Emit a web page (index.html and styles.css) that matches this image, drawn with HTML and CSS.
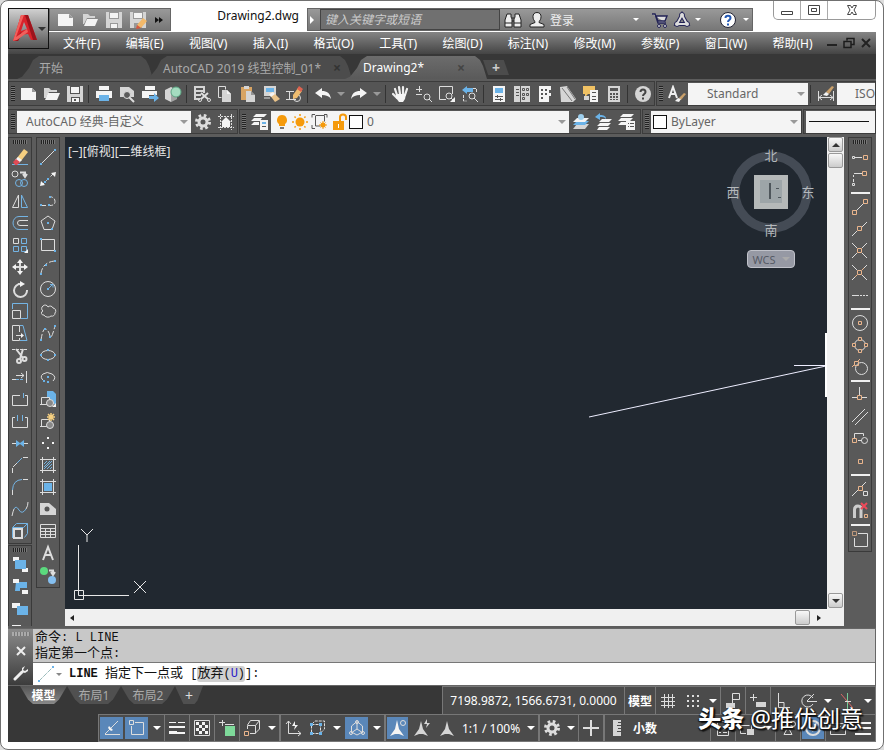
FILE: index.html
```html
<!DOCTYPE html>
<html lang="zh-CN">
<head>
    <meta charset="UTF-8">
    <meta name="viewport" content="width=device-width, initial-scale=1.0">
    <title>Drawing2.dwg</title>
    <link rel="stylesheet" href="styles.css">
</head>
<body>

<div class="window">

    <!-- Title bar and menu -->
    <header class="header">
        <button class="app-button" aria-label="应用程序菜单">
            <svg width="26" height="30" viewBox="0 0 26 30">
                <path fill="#d9232b" fill-rule="evenodd" d="M9 1h7l9 25h-6l-3-6-8 1-2 6H1zM12 8l-3 9 6-2z"/>
                <path fill="#9c141c" d="M13 1h3l9 25h-4zM1 27l8-9 1 2-4 7z"/>
                <path fill="#f0605c" d="M9 1h3L4 23l11-8 1 3-11 8-4 1z"/>
            </svg>
            <i class="caret dark"></i>
        </button>
        <div class="title-row">
            <div class="quick-access">
                <button aria-label="新建"><svg class="icon" viewBox="0 0 18 18"><path class="wf" d="M1 3h11l4 4v8H1z"/><path class="gf" d="M12 3v4h4z"/></svg></button>
                <button aria-label="打开"><svg class="icon" viewBox="0 0 18 18"><path class="lf" d="M2 3h5l2 2h5v2H6l-3 6H2z"/><path class="wf" d="M6 8h11l-3 7H3z"/></svg></button>
                <button aria-label="保存"><svg class="icon" viewBox="0 0 18 18"><path class="lf" d="M1 1h16v16H1z"/><path class="gf" d="M4 1h10v7H4zM5 12h8v5H5z"/><path class="wf" d="M5 2h8v5H5zM6 13h6v4H6z"/></svg></button>
                <button aria-label="另存为"><svg class="icon" viewBox="0 0 18 18"><path class="lf" d="M1 1h16v16H1z"/><path class="gf" d="M4 1h10v7H4zM5 12h8v5H5z"/><path class="wf" d="M5 2h8v5H5z"/><path fill="#f3b96a" d="M8 14l6-7 4 3-6 7z"/><path fill="#d9573c" d="M8 14l4 3-5 1z"/></svg></button>
                <button aria-label="更多"><svg class="icon" viewBox="0 0 18 18"><path fill="#111" d="M5 6l4 3-4 3zM9 6l4 3-4 3z"/></svg></button>
            </div>
            <div class="window-title">Drawing2.dwg</div>
            <div class="info-center">
                <button class="expand" aria-label="展开"><svg width="8" height="10" viewBox="0 0 8 10"><path fill="#fff" d="M2 1l4 4-4 4z"/></svg></button>
                <input class="search" type="text" placeholder="键入关键字或短语" aria-label="搜索">
                <button aria-label="查找"><svg class="icon" viewBox="0 0 18 18"><path fill="#eee" stroke="#222" d="M3 3h4v3l1 2v8H1V9zM11 3h4l2 6v7h-7V8l1-2z"/><path stroke="#222" d="M8 7h2M8 10h2M1 12h7M10 12h7"/></svg></button>
                <button class="sign-in"><svg class="icon" viewBox="0 0 18 18"><path fill="#eee" stroke="#222" d="M9 1.500c-6 0-4 8-2 9v1l-5 2v2.500h14v-2.500l-5-2v-1c2-1 4-9-2-9z"/></svg>登录</button>
                <i class="caret light push"></i>
                <button aria-label="购物车"><svg class="icon" viewBox="0 0 18 18"><path fill="#ddd" stroke="#225" stroke-width="1.400" d="M1 3h3l3 9h8M5 5h11l-2 5H7z"/><circle cx="8" cy="15" r="1.500" fill="#ddd" stroke="#225"/><circle cx="14" cy="15" r="1.500" fill="#ddd" stroke="#225"/></svg></button>
                <button aria-label="应用商店"><svg class="icon" viewBox="0 0 18 18"><g fill="#ddd" stroke="#225"><path fill="none" stroke-width="4" d="M9 4l-5 9h10z"/><circle cx="9" cy="4" r="2.500"/><circle cx="4" cy="13" r="2.500"/><circle cx="14" cy="13" r="2.500"/></g><path fill="none" stroke="#ddd" stroke-width="2" d="M9 4l-5 9h10z"/></svg></button>
                <i class="caret light"></i>
                <button class="help-button" aria-label="帮助"><svg class="icon" viewBox="0 0 18 18"><circle cx="9" cy="9" r="7.500" fill="#fff" stroke="#223"/><path fill="none" stroke="#2459b5" stroke-width="2" d="M6.500 7c0-3 5-3 5 0 0 2-2.500 2-2.500 4M9 12.500v2"/></svg></button>
                <i class="caret light"></i>
            </div>
            <div class="window-controls">
                <button aria-label="最小化"><svg width="14" height="12" viewBox="0 0 14 12"><path class="sys" d="M1.500 7.500h11v3h-11z"/></svg></button>
                <button aria-label="还原"><svg width="14" height="12" viewBox="0 0 14 12"><path class="sys" d="M1.500 1.500h11v9h-11zM4.500 4.500h5v3h-5z"/></svg></button>
                <button class="close" aria-label="关闭"><svg width="14" height="12" viewBox="0 0 14 12"><path class="sys" d="M2.500 1.500h3L7 4l1.500-2.500h3L9 6l2.500 4.500h-3L7 8l-1.500 2.500h-3L5 6z"/></svg></button>
            </div>
        </div>
        <nav class="menu">
            <a href="#">文件(F)</a>
            <a href="#">编辑(E)</a>
            <a href="#">视图(V)</a>
            <a href="#">插入(I)</a>
            <a href="#">格式(O)</a>
            <a href="#">工具(T)</a>
            <a href="#">绘图(D)</a>
            <a href="#">标注(N)</a>
            <a href="#">修改(M)</a>
            <a href="#">参数(P)</a>
            <a href="#">窗口(W)</a>
            <a href="#">帮助(H)</a>
            <span class="doc-controls">
                <button aria-label="最小化图形"><svg width="12" height="12" viewBox="0 0 12 12"><path fill="#222" d="M1 7h10v2H1z"/></svg></button>
                <button aria-label="还原图形"><svg width="12" height="12" viewBox="0 0 12 12"><path fill="none" stroke="#1c1c1c" stroke-width="1.500" d="M4 3.500v-2h7v6H8.500M1 4.500h7v6H1z"/></svg></button>
                <button aria-label="关闭图形"><svg width="12" height="12" viewBox="0 0 12 12"><path stroke="#222" stroke-width="2" d="M2 2l8 8M10 2l-8 8"/></svg></button>
            </span>
        </nav>
    </header>

    <!-- Drawing tabs -->
    <div class="tabs">
        <button class="tab start">开始</button>
        <button class="tab file">AutoCAD 2019 线型控制_01*<b class="tab-close">×</b></button>
        <button class="tab active">Drawing2*<b class="tab-close">×</b></button>
        <button class="tab add" aria-label="新图形">+</button>
    </div>

    <!-- Toolbars -->
    <div class="toolbar-row">
        <div class="toolbar">
            <i class="grip"></i>
            <button aria-label="新建"><svg class="icon" viewBox="0 0 18 18"><path class="wf" d="M1 3h11l4 4v8H1z"/><path class="gf" d="M12 3v4h4z"/></svg></button>
            <button aria-label="打开"><svg class="icon" viewBox="0 0 18 18"><path class="lf" d="M1 3h5l2 2h6v2H6l-3 6H1z"/><path class="wf" d="M5 8h12l-3 7H2z"/></svg></button>
            <button aria-label="保存"><svg class="icon" viewBox="0 0 18 18"><path class="lf" d="M1 1h16v16H1z"/><path class="df" d="M4 1h10v8H4zM5 12h9v5H5z"/><path class="wf" d="M5 2h8v6H5zM6 13h7v4H6z"/><path class="df" d="M8 14h2v2H8z"/></svg></button>
            <i class="sep"></i>
            <button aria-label="打印"><svg class="icon" viewBox="0 0 18 18"><path class="wf" d="M4 1h10v4H4zM1 6h16v7h-3v-2H4v2H1z"/><path class="bf" d="M4 10h10v6H4z"/></svg></button>
            <button aria-label="打印预览"><svg class="icon" viewBox="0 0 18 18"><path class="lf" d="M2 2h9l5 4v6H2z"/><circle cx="9" cy="10" r="3.500" fill="#5b5b5b" stroke="#ddd"/><path class="ln thick" d="M11 12l5 5"/></svg></button>
            <button aria-label="发布"><svg class="icon" viewBox="0 0 18 18"><path class="wf" d="M4 1h10v4H4zM1 6h15v4H8v3H1z"/><path class="bf" d="M8 11h5V8l5 5-5 4v-3H8z"/></svg></button>
            <button aria-label="三维打印"><svg class="icon" viewBox="0 0 18 18"><path class="lf" d="M1 5l6-3 6 3v9l-6 3-6-3z"/><path class="df" d="M7 8l6-3v9l-6 3z" opacity=".4"/><circle cx="12" cy="7" r="5" fill="#a5dcc0" stroke="#5fa786"/></svg></button>
            <i class="sep"></i>
            <button aria-label="剪切"><svg class="icon" viewBox="0 0 18 18"><path class="lf" d="M1 1h10v2H1zM1 5h11v2H1zM1 9h7v2H1zM1 13h6v2H1zM1 1h2v14H1zM10 1h2v7h-2z"/><path class="ln thick" d="M8 8l7 6M15 8l-7 6"/><circle class="ln" cx="7" cy="15" r="1.500"/><circle class="ln" cx="16" cy="15" r="1.500"/></svg></button>
            <button aria-label="复制"><svg class="icon" viewBox="0 0 18 18"><path class="ln" d="M5.500 12.500h-3v-11h7v3"/><path class="lf" d="M6 5h5l4 4v8H6z"/><path class="wf" d="M11 5v4h4z"/></svg></button>
            <button aria-label="粘贴"><svg class="icon" viewBox="0 0 18 18"><path fill="#d8a463" d="M2 2h11v13H2z"/><path class="lf" d="M5 1h5v3H5zM7 6h5l4 4v7H7z"/><path class="df" d="M12 6v4h4z" opacity=".5"/></svg></button>
            <button aria-label="特性匹配"><svg class="icon" viewBox="0 0 18 18"><path class="lf" d="M2 1h12v10H2z"/><path class="bf" d="M4 3h8v4H4z"/><path class="ln" d="M2 13h6"/><path fill="#e9c38a" d="M7 9l4-2 7 7-5 3z"/><path class="wf" d="M7 9l4-2 2 2-4 3z"/></svg></button>
            <button aria-label="块编辑器"><svg class="icon" viewBox="0 0 18 18"><path class="ln" d="M1 6.500h8M4.500 6v8M1 14.500h10"/><circle class="ln" cx="12" cy="13" r="3.500"/><path fill="#efbd70" d="M8 10l5-7 4 3-5 7-4 1z"/><path fill="#df6350" d="M12 4l2-3 4 3-2 3z"/></svg></button>
            <i class="sep"></i>
            <button aria-label="放弃"><svg class="icon" viewBox="0 0 18 18"><path class="wf" d="M1 8l7-5v3c5 0 8 2 9 8-2-3-5-4-9-4v3z"/></svg></button>
            <button class="drop" aria-label="放弃列表"><i class="caret"></i></button>
            <button aria-label="重做"><svg class="icon" viewBox="0 0 18 18"><path class="wf" d="M17 8l-7-5v3c-5 0-8 2-9 8 2-3 5-4 9-4v3z"/></svg></button>
            <button class="drop" aria-label="重做列表"><i class="caret"></i></button>
            <i class="sep"></i>
            <button aria-label="平移"><svg class="icon" viewBox="0 0 18 18"><path fill="none" stroke="#eee" stroke-width="2.200" stroke-linecap="round" d="M5 10L3 4M8 9L7 2M11 9V2M13 10l2-6M5 13l-4-4"/><path class="wf" d="M4 9h10l-1 5-2 3H7l-3-4z"/></svg></button>
            <button aria-label="实时缩放"><svg class="icon" viewBox="0 0 18 18"><path class="ln" d="M1 4.500h6M4.500 1v6M1 9.500h6"/><circle class="ln" cx="12" cy="12" r="3"/><path class="ln" d="M14 14l3 3"/></svg></button>
            <button aria-label="窗口缩放"><svg class="icon" viewBox="0 0 18 18"><path class="ln" d="M8 14.500H1.500v-13h13V9"/><circle class="ln" cx="11" cy="11" r="3"/><path class="ln" d="M13 13l3 3"/><path class="wf" d="M17 12v5h-5z"/></svg></button>
            <button aria-label="缩放上一个"><svg class="icon" viewBox="0 0 18 18"><path class="bf" d="M1 5l5-4v2h6v4H6v2z"/><path class="ln" d="M2.500 10v6h3M12 3.500h3.500V7" stroke-dasharray="3 1"/><circle class="ln" cx="11" cy="11" r="3"/><path class="ln" d="M13 13l4 4"/></svg></button>
            <i class="sep"></i>
            <button aria-label="特性"><svg class="icon" viewBox="0 0 18 18"><path class="wf" d="M3 1h12v16H3z"/><path class="bf" d="M5 3h8v5H5z"/><path stroke="#555" d="M5 11.500h8M5 14.500h8M7.500 10v3M10.500 13v3"/></svg></button>
            <button aria-label="设计中心"><svg class="icon" viewBox="0 0 18 18"><path class="lf" d="M1 1h16v16H1z"/><path stroke="#555" fill="none" d="M3 4.500h3M3 7.500h3M3 10.500h3M7.500 1v16M9.500 3.500h2v2h-2zM13.500 3.500h2v2h-2zM9.500 8.500h2v2h-2zM13.500 8.500h2v2h-2zM9.500 12.500h2v2h-2z"/></svg></button>
            <button aria-label="工具选项板"><svg class="icon" viewBox="0 0 18 18"><path class="wf" d="M3 1h12v4h-2v3h2v3h-2v6H3z"/><path class="df" d="M5 4h2v2H5zM9 4h2v2H9zM5 8h2v2H5zM9 8h2v2H9zM5 12h2v2H5z"/></svg></button>
            <button aria-label="图纸集"><svg class="icon" viewBox="0 0 18 18"><path class="lf" d="M1 2l7-1 9 13-3 3H2z"/><path fill="none" stroke="#777" d="M3 3l10 13M8 2l8 12"/></svg></button>
            <button aria-label="标记集"><svg class="icon" viewBox="0 0 18 18"><path fill="#f1c264" d="M1 1h12v8H6l-3 3V9H1z"/><path class="wf" d="M8 5h8v12H8z"/><path class="df" d="M10 7h4v1h-4zM10 11h4v1h-4zM10 14h4v1h-4z"/><path class="lf" d="M2 11h5v4H2z"/></svg></button>
            <button aria-label="计算器"><svg class="icon" viewBox="0 0 18 18"><path class="lf" d="M3 1h12v16H3z"/><path class="df" d="M5 3h8v3H5zM5 8h2v2H5zM8 8h2v2H8zM11 8h2v2h-2zM5 11h2v2H5zM8 11h2v2H8zM11 11h2v2h-2zM5 14h2v1H5zM8 14h2v1H8zM11 14h2v1h-2z"/></svg></button>
            <i class="sep"></i>
            <button aria-label="帮助"><svg class="icon" viewBox="0 0 18 18"><circle class="lf" cx="9" cy="9" r="8"/><path fill="none" stroke="#444" stroke-width="2" d="M6.500 7c0-3.500 5-3.500 5 0 0 2-2.500 2-2.500 4M9 12.500v2"/></svg></button>
        </div>
        <div class="toolbar grow">
            <i class="grip"></i>
            <button aria-label="文字样式"><svg class="icon" viewBox="0 0 18 18"><path fill="none" stroke="#eee" stroke-width="2" d="M1 13L5 2l4 11M2 9h6"/><path fill="#caa06a" d="M11 13l5-5 2 1-5 6z"/><path class="wf" d="M7 16l3-3 3 1-2 3z"/></svg></button>
            <span class="combo text-style"><select aria-label="文字样式"><option>Standard</option></select><i class="caret"></i></span>
            <i class="sep"></i>
            <button aria-label="标注样式"><svg class="icon" viewBox="0 0 18 18"><path class="ln" d="M1.500 6v10M16.500 6v10M2 12.500h14M5 10l-3 2.500L5 15M13 10l3 2.500-3 2.500"/><path fill="#caa06a" d="M9 7l6-6 2 1-5 7z"/><path class="wf" d="M6 10l3-3 3 2-2 2z"/></svg></button>
            <span class="combo dim-style"><select aria-label="标注样式"><option>ISO-25</option></select></span>
        </div>
    </div>

    <div class="toolbar-row">
        <div class="toolbar">
            <i class="grip"></i>
            <span class="combo workspace"><select aria-label="工作空间"><option>AutoCAD 经典-自定义</option></select><i class="caret"></i></span>
            <button aria-label="工作空间设置"><svg class="icon" viewBox="0 0 18 18"><circle cx="9" cy="9" r="4" fill="none" stroke="#ddd" stroke-width="3"/><circle cx="9" cy="9" r="6.500" fill="none" stroke="#ddd" stroke-width="3" stroke-dasharray="2.600 2.500"/></svg></button>
            <button aria-label="我的工作空间"><svg class="icon" viewBox="0 0 18 18"><path class="ln" stroke-dasharray="2 1" d="M3.500 1v16M14.500 1v16M1 3.500h16M1 14.500h16"/><path class="wf" d="M9 4l5 5h-1v5H5V9H4z"/></svg></button>
        </div>
        <div class="toolbar layers">
            <i class="grip"></i>
            <button aria-label="图层特性"><svg class="icon" viewBox="0 0 18 18"><path class="wf" d="M5 1h11l-3 3H2zM3 5h8l-2 3H0zM3 9h5v3H0z"/><path class="wf" d="M9 7h8v10H9z"/><path class="bf" d="M11 9h4v2h-4z"/><path class="df" d="M11 13h4v1h-4z"/></svg></button>
            <span class="combo layer">
                <svg class="icon" viewBox="0 0 18 18"><path fill="#f59a0b" d="M9 2a5 5 0 0 0-3 9v2h6v-2a5 5 0 0 0-3-9z"/><path fill="#777" d="M7 14h4v2H7z"/></svg>
                <svg class="icon" viewBox="0 0 18 18"><circle cx="9" cy="9" r="4.500" fill="#f59a0b"/><path stroke="#f59a0b" stroke-width="1.500" d="M9 1v2M9 15v2M1 9h2M15 9h2M3.500 3.500l1.200 1.200M13.300 13.300l1.200 1.200M14.500 3.500l-1.200 1.200M4.700 13.300l-1.200 1.200"/></svg>
                <svg class="icon wide" viewBox="0 0 18 18"><path fill="none" stroke="#555" d="M4.500 2.500h9v6M4.500 3v10h5M1 4.500v-3h3M13 1.500h3v3M1 12v3.500h3"/><circle cx="12" cy="12" r="2.500" fill="#f59a0b"/><path stroke="#f59a0b" d="M12 8v8M8 12h8M9.500 9.500l5 5M14.500 9.500l-5 5"/></svg>
                <svg class="icon" viewBox="0 0 18 18"><path fill="#f59a0b" d="M2 8h11v9H2z"/><path fill="none" stroke="#f59a0b" stroke-width="2" d="M9 8V4q0-2.500 3-2.500T15 4v3"/><path fill="#fff" d="M7 11h1v4H7z"/></svg>
                <i class="swatch"></i>
                <select aria-label="图层"><option>0</option></select><i class="caret"></i>
            </span>
            <button aria-label="置为当前"><svg class="icon" viewBox="0 0 18 18"><path class="lf" d="M5 11h12l-4 5H1z"/><path class="bf" d="M5 8h12l-4 4H1z"/><path class="wf" d="M5 5h12l-4 4H1z"/><circle fill="#9fd0ee" cx="9" cy="4" r="3"/></svg></button>
            <button aria-label="上一个图层"><svg class="icon" viewBox="0 0 18 18"><path class="bf" d="M0 4l5-4v2c4 0 6 1 6 4-2-2-3-2-6-2v3z"/><path class="wf" d="M7 6h10l-3 3H4zM5 10h11l-3 3H2zM4 14h11l-3 3H2z"/></svg></button>
            <button aria-label="图层状态"><svg class="icon" viewBox="0 0 18 18"><path class="wf" d="M5 1h11l-3 3H2zM3 5h12l-3 3H0zM3 9h5v3H0z"/><path class="wf" d="M8 8h9v9H8z"/><path class="df" d="M10 10h1v1h-1zM12 10h4v1h-4zM10 13h1v1h-1zM12 13h4v1h-4z"/></svg></button>
            <i class="spacer"></i>
        </div>
        <div class="toolbar">
            <i class="grip"></i>
            <span class="combo color"><i class="swatch"></i><select aria-label="颜色"><option>ByLayer</option></select><i class="caret"></i></span>
        </div>
        <div class="toolbar linetypes">
            <button class="combo linetype" aria-label="线型"></button>
        </div>
    </div>

    <!-- Work area -->
    <main class="work-area">
        <div class="dock">
            <div class="palette">
                <i class="grip flat"></i>
                <button aria-label="删除"><svg class="icon" viewBox="0 0 18 18"><path class="bl" d="M1 16.500h16"/><path fill="#f5cf80" d="M6 10l7-9 4 3-7 9z"/><path class="wf" d="M4 12l3-3 4 3-3 3z"/><path fill="#e04b55" d="M2 14l3-3 4 3-3 3H4z"/></svg></button>
                <button aria-label="复制"><svg class="icon" viewBox="0 0 18 18"><circle class="ln" cx="4" cy="4" r="3"/><path class="ln thick" d="M9 2.500h5V6M12 4l2 3 2-3"/><circle class="bl" cx="8" cy="13" r="3.500"/><circle class="bl" cx="13" cy="13" r="3.500"/></svg></button>
                <button aria-label="镜像"><svg class="icon" viewBox="0 0 18 18"><path class="ln" d="M7.500 3v12.500h-6z"/><path class="bl" d="M10.500 3v12.500h6z"/></svg></button>
                <button aria-label="偏移"><svg class="icon" viewBox="0 0 18 18"><path class="bl" d="M17 2.500H8a6 6.500 0 0 0 0 13h9"/><path class="ln" d="M17 6.500H9a2.500 2.500 0 0 0 0 5h8"/></svg></button>
                <button aria-label="阵列"><svg class="icon" viewBox="0 0 18 18"><path class="ln" d="M2.500 2.500h5v5h-5z"/><path class="bl" d="M10.500 2.500h5v5h-5zM2.500 10.500h5v5h-5zM10.500 10.500h5v5h-5z"/><path class="wf" d="M17 13v4h-4z"/></svg></button>
                <button aria-label="移动"><svg class="icon" viewBox="0 0 18 18"><path class="ln thick" d="M9 3v12M3 9h12"/><path class="wf" d="M9 1l3 4H6zM9 17l3-4H6zM1 9l4-3v6zM17 9l-4-3v6z"/></svg></button>
                <button aria-label="旋转"><svg class="icon" viewBox="0 0 18 18"><path class="ln thick" d="M10 4a6.500 6.500 0 1 0 6 6M7 4h4"/><path class="wf" d="M9 1l5 3-5 3z"/></svg></button>
                <button aria-label="缩放"><svg class="icon" viewBox="0 0 18 18"><path class="bl" d="M1.500 7V1.500h15v15H10"/><path class="ln" d="M1.500 8.500h8v8h-8z"/></svg></button>
                <button aria-label="拉伸"><svg class="icon" viewBox="0 0 18 18"><path class="bl" d="M9 1.500h3l4 15H9"/><path class="ln" d="M8.500 8V1.500h-7v15h7V14M5 11.500h6"/><path class="wf" d="M10 9l3 2.500-3 2.500z"/></svg></button>
                <button aria-label="修剪"><svg class="icon" viewBox="0 0 18 18"><path class="ln" stroke-dasharray="3 1" d="M1 3.500h16"/><path class="ln thick" d="M5 3l7 9M12 3l-3 10"/><circle class="ln thick" cx="13.500" cy="13" r="2"/><circle class="ln thick" cx="8" cy="15" r="2"/></svg></button>
                <button aria-label="延伸"><svg class="icon" viewBox="0 0 18 18"><path class="bl" stroke-dasharray="3 1" d="M1 11.500h12"/><path class="ln" d="M15.500 3v12M5 7.500h8M10 5l3 2.500-3 2.500"/><path class="ln" d="M1 11.500h4"/></svg></button>
                <button aria-label="打断于点"><svg class="icon" viewBox="0 0 18 18"><path class="ln" d="M9 5.500H1.500v10h15v-10H14"/><path class="bl" d="M12.500 3v5"/></svg></button>
                <button aria-label="打断"><svg class="icon" viewBox="0 0 18 18"><path class="ln" d="M4 5.500H1.500v10h15v-10H14"/><path class="bl" d="M6.500 3v6M11.500 3v6"/></svg></button>
                <button aria-label="合并"><svg class="icon" viewBox="0 0 18 18"><path class="ln" d="M1 9.500h4M13 9.500h4"/><path class="bf" d="M5 6l4 3 4-3v7l-4-3-4 3z"/></svg></button>
                <button aria-label="倒角"><svg class="icon" viewBox="0 0 18 18"><path class="ln" d="M1.500 17v-5M12 1.500h5"/><path class="bl" d="M2 11l9-9"/><path class="ln" d="M2 11l4-4"/></svg></button>
                <button aria-label="圆角"><svg class="icon" viewBox="0 0 18 18"><path class="ln" d="M1.500 17v-5M12 1.500h5"/><path class="bl" d="M1.500 12Q2 2 11 1.500"/></svg></button>
                <button aria-label="光顺曲线"><svg class="icon" viewBox="0 0 18 18"><path class="ln" d="M1 16q1-5 2-7M15 9q2-3 2-7"/><path class="bl" d="M3 9q2-4 5 1t7-1"/></svg></button>
                <button aria-label="分解"><svg class="icon" viewBox="0 0 18 18"><path class="ln thick" d="M3 7h8v9H3z"/><path class="bl" d="M1.500 5.500l4-4h11l-4 4zM13.500 15.500l3-4v-10M1.500 6v10"/></svg></button>
            </div>
            <div class="palette">
                <i class="grip flat"></i>
                <button aria-label="前置"><svg class="icon" viewBox="0 0 18 18"><path class="wf" d="M2 1h6v4H2zM11 12h6v4h-6z"/><path class="bf" d="M4 4h11v9H4z"/></svg></button>
                <button aria-label="后置"><svg class="icon" viewBox="0 0 18 18"><path class="bf" d="M5 4h11v6H9v3H4z"/><path class="wf" d="M2 1h6v4H2zM11 12h6v4h-6z"/></svg></button>
                <button aria-label="置于对象之上"><svg class="icon" viewBox="0 0 18 18"><path class="wf" d="M1 3h8v5H1z"/><path class="bf" d="M6 6h11v9H6z"/></svg></button>
                <button aria-label="置于对象之下"><svg class="icon" viewBox="0 0 18 18"><path class="wf" d="M1 3h9v5H1z"/><path class="bf" d="M6 9h11v6H6z"/></svg></button>
            </div>
        </div>
        <div class="dock">
            <div class="palette">
                <i class="grip flat"></i>
                <button aria-label="直线"><svg class="icon" viewBox="0 0 18 18"><path class="ln" d="M2 16L16 2"/><path class="bf" d="M1 15h2v2H1zM15 1h2v2h-2z"/></svg></button>
                <button aria-label="构造线"><svg class="icon" viewBox="0 0 18 18"><path class="ln" stroke-dasharray="4 2" d="M3 15L15 3"/><path class="wf" d="M1 16l1-5 4 4zM17 2l-1 5-4-4z"/><path class="bf" d="M5 11h2v2H5zM8 8h2v2H8z"/></svg></button>
                <button aria-label="多段线"><svg class="icon" viewBox="0 0 18 18"><path class="ln" d="M2 13.500h9q5 0 5-4t-5-5" stroke-dasharray="5 2"/><path class="bf" d="M1 12h2v2H1zM9 12h2v2H9zM10 4h2v2h-2z"/></svg></button>
                <button aria-label="正多边形"><svg class="icon" viewBox="0 0 18 18"><path class="ln" d="M9 2l7 5-3 8.500H5L2 7z"/><path class="bf" d="M8 8h2v2H8zM12 14h2v2h-2z"/></svg></button>
                <button aria-label="矩形"><svg class="icon" viewBox="0 0 18 18"><path class="ln" d="M2.500 3.500h13v11h-13z"/><path class="bf" d="M1 2h2v2H1zM15 14h2v2h-2z"/></svg></button>
                <button aria-label="圆弧"><svg class="icon" viewBox="0 0 18 18"><path class="ln" d="M2 15Q4 4 16 3" stroke-dasharray="5 2"/><path class="bf" d="M1 15h2v2H1zM6 6h2v2H6zM15 2h2v2h-2z"/></svg></button>
                <button aria-label="圆"><svg class="icon" viewBox="0 0 18 18"><circle class="ln" cx="9" cy="9" r="7.500"/><path class="bl" d="M9 9l4-4M11 4.500h3v3"/><path class="bf" d="M8 8h2v2H8z"/></svg></button>
                <button aria-label="修订云线"><svg class="icon" viewBox="0 0 18 18"><path class="ln" d="M4 9a3 3 0 0 1 0-5 3 3 0 0 1 5 1 3 3 0 0 1 5 1 3 3 0 0 1 2 5 3 3 0 0 1-4 3 4 3 0 0 1-7-1 2 2 0 0 1-1-4z"/></svg></button>
                <button aria-label="样条曲线"><svg class="icon" viewBox="0 0 18 18"><path class="ln" d="M2 16Q4 3 7 5t4 7 5-10" stroke-dasharray="6 2"/><path class="bf" d="M1 15h2v2H1zM5 4h2v2H5zM10 12h2v2h-2zM15 1h2v2h-2z"/></svg></button>
                <button aria-label="椭圆"><svg class="icon" viewBox="0 0 18 18"><ellipse class="ln" cx="9" cy="9" rx="7" ry="4.500"/><path class="bf" d="M1 8h2v2H1zM15 8h2v2h-2zM8 3h2v2H8zM8 13h2v2H8z"/></svg></button>
                <button aria-label="椭圆弧"><svg class="icon" viewBox="0 0 18 18"><path class="ln" d="M5 13Q0 9 4 6t9 0 1 7"/><path class="bf" d="M8 8h2v2H8zM4 12h2v2H4zM8 13h2v2H8z"/></svg></button>
                <button aria-label="插入块"><svg class="icon" viewBox="0 0 18 18"><path class="bf" d="M8 1h6l3 3v10H8z"/><path fill="#5b5b5b" stroke="#ddd" d="M2.500 7.500h8v7h-8zM1 14.500h8"/><circle cx="11" cy="13" r="3.500" fill="#888" stroke="#ddd"/><path class="wf" d="M17 13v4h-4z"/></svg></button>
                <button aria-label="创建块"><svg class="icon" viewBox="0 0 18 18"><path class="ln" d="M10.500 9V7.500h-8v7H8M1 14.500h8"/><circle cx="11" cy="13" r="3.500" fill="#888" stroke="#ddd"/><path stroke="#f5cf80" stroke-width="1.500" d="M12 1v8M8 5h8M9 2l6 6M15 2L9 8"/></svg></button>
                <button aria-label="点"><svg class="icon" viewBox="0 0 18 18"><path class="wf" d="M8 3h2v2H8zM3 8h2v2H3zM13 8h2v2h-2zM8 13h2v2H8z"/></svg></button>
                <button aria-label="图案填充"><svg class="icon" viewBox="0 0 18 18"><path class="ln" d="M3.500 1v16M14.500 1v16M1 3.500h16M1 14.500h16"/><path class="bl" d="M5 8l3-3M5 11l6-6M5 13l8-8M8 13l5-5M11 13l2-2"/></svg></button>
                <button aria-label="渐变色"><svg class="icon" viewBox="0 0 18 18"><path class="ln" d="M3.500 1v16M14.500 1v16M1 3.500h16M1 14.500h16"/><path class="bf" d="M5 5h8v8H5z"/></svg></button>
                <button aria-label="面域"><svg class="icon" viewBox="0 0 18 18"><path class="lf" d="M1 3h9l7 6v6H1z"/><circle class="df" cx="8" cy="9" r="2.500"/></svg></button>
                <button aria-label="表格"><svg class="icon" viewBox="0 0 18 18"><path class="ln" d="M1.500 2.500h15v13h-15zM1 6.500h16M1 9.500h16M1 12.500h16M6.500 6v10M11.500 6v10"/></svg></button>
                <button aria-label="多行文字"><svg class="icon" viewBox="0 0 18 18"><path fill="none" stroke="#ddd" stroke-width="2" d="M4 16L9 3l5 13M6 11h6"/></svg></button>
                <button aria-label="添加选定对象"><svg class="icon" viewBox="0 0 18 18"><circle cx="5" cy="5" r="4" fill="#5bd97e"/><circle cx="13" cy="14" r="4" fill="#85bff0"/><path class="ln thick" d="M10 4.500h4V8M12 6l2 3 2-3"/></svg></button>
            </div>
        </div>

        <div class="viewport">
            <div class="canvas">
                <span class="view-label">[−][俯视][二维线框]</span>
                <svg class="view-cube" width="96" height="96" viewBox="0 0 96 96">
                    <circle cx="48" cy="47" r="36" fill="none" stroke="#444b55" stroke-width="9"/>
                    <path fill="#b5b9b9" d="M31 30h34v34H31z"/>
                    <path fill="#9da5a8" d="M37 35h22v23H37z"/>
                    <path stroke="#4e565b" stroke-width="2" d="M47 38v16"/>
                    <path stroke="#4e565b" d="M53 43.500h3M55 52.500h3"/>
                    <text x="48" y="15">北</text>
                    <text x="48" y="90">南</text>
                    <text x="10" y="52">西</text>
                    <text x="85" y="52">东</text>
                </svg>
                <button class="wcs">WCS<i class="caret"></i></button>
                <svg class="rubber-band" width="240" height="68" viewBox="0 0 240 68">
                    <path stroke="#eef" fill="none" d="M2 84L239 33M207 32.500h32"/>
                    <path stroke="#fff" stroke-width="2" d="M239 0v64"/>
                </svg>
                <svg class="ucs" width="80" height="76" viewBox="0 0 80 76">
                    <path stroke="#e8e8e8" fill="none" d="M5.500 16v46M10 66.500h46M1.500 61.500h9v9h-9zM5.500 62v4.500h5M8 0l6 6 6-6M14 6v7M61 52l12 12M73 52L61 64"/>
                </svg>
            </div>
            <div class="scroll-y">
                <button aria-label="向上滚动"><i class="caret up"></i></button>
                <button class="thumb" aria-label="垂直滑块"></button>
                <button class="end" aria-label="向下滚动"><i class="caret"></i></button>
            </div>
            <div class="scroll-x">
                <button aria-label="向左滚动"><svg width="6" height="8" viewBox="0 0 6 8"><path fill="#222" d="M5 1v6L1 4z"/></svg></button>
                <button class="thumb" aria-label="水平滑块"></button>
                <button aria-label="向右滚动"><svg width="6" height="8" viewBox="0 0 6 8"><path fill="#222" d="M1 1v6l4-3z"/></svg></button>
            </div>
        </div>

        <div class="dock right">
            <div class="palette">
                <i class="grip flat"></i>
                <button aria-label="临时追踪点"><svg class="icon" viewBox="0 0 18 18"><path class="ln" d="M1.500 8.500h2v2h-2zM4 9.500h7"/><path class="or" d="M12.500 7.500h4v4h-4z"/></svg></button>
                <button aria-label="捕捉自"><svg class="icon" viewBox="0 0 18 18"><path class="ln" d="M11 3.500H2.500V12" stroke-dasharray="8 2 2 2"/><path class="ln" d="M1.500 13.500h2v2h-2z"/><path class="or" d="M11.500 1.500h4v4h-4z"/></svg></button>
                <i class="rule"></i>
                <button aria-label="端点"><svg class="icon" viewBox="0 0 18 18"><path class="ln" d="M5 13l8-8"/><path class="or" d="M1.500 12.500h4v4h-4zM12.500 1.500h4v4h-4z"/></svg></button>
                <button aria-label="中点"><svg class="icon" viewBox="0 0 18 18"><path class="ln" d="M1 16l5-5M11 7l5-5"/><path class="or" d="M6.500 6.500h4v4h-4z"/></svg></button>
                <button aria-label="交点"><svg class="icon" viewBox="0 0 18 18"><path class="ln" d="M1 1l5 5M11 11l5 5M1 16l5-5M11 6l5-5"/><path class="or" d="M6.500 6.500h4v4h-4z"/></svg></button>
                <button aria-label="外观交点"><svg class="icon" viewBox="0 0 18 18"><path class="ln" d="M1 1l5 5M11 11l5 5M1 16l3-3M13 4l3-3"/><path class="or" d="M6.500 6.500h4v4h-4zM4 13l2-2M11 6l2-2"/></svg></button>
                <button aria-label="延长线"><svg class="icon" viewBox="0 0 18 18"><path class="ln" d="M1 9.500h7"/><path class="ln" stroke-dasharray="2 1" d="M9 9.500h8"/></svg></button>
                <i class="rule"></i>
                <button aria-label="圆心"><svg class="icon" viewBox="0 0 18 18"><circle class="ln" cx="9" cy="9" r="7.500"/><path class="or" d="M7.500 7.500h3v3h-3z"/></svg></button>
                <button aria-label="象限点"><svg class="icon" viewBox="0 0 18 18"><circle class="ln" cx="9" cy="9" r="5.500"/><path fill="#595959" stroke="#eab58c" d="M7.500 1.500h3v3h-3zM7.500 13.500h3v3h-3zM1.500 7.500h3v3h-3zM13.500 7.500h3v3h-3z"/></svg></button>
                <button aria-label="切点"><svg class="icon" viewBox="0 0 18 18"><circle class="ln" cx="10.500" cy="10.500" r="6"/><path class="or" d="M3.500 3.500h4v4h-4zM1 9l2-2M7 3l2-2"/></svg></button>
                <i class="rule"></i>
                <button aria-label="垂足"><svg class="icon" viewBox="0 0 18 18"><path class="ln" d="M8.500 1v8M1 11.500h5M11 11.500h5"/><path class="or" d="M6.500 9.500h4v4h-4z"/></svg></button>
                <button aria-label="平行线"><svg class="icon" viewBox="0 0 18 18"><path class="ln" d="M1 14L14 1M4 17L17 4"/></svg></button>
                <button aria-label="插入点"><svg class="icon" viewBox="0 0 18 18"><path class="ln" d="M3.500 8V3.500h9V6M7 10.500h4"/><circle class="ln" cx="13.500" cy="10.500" r="3"/><path class="or" d="M1.500 8.500h4v4h-4z"/></svg></button>
                <button aria-label="节点"><svg class="icon" viewBox="0 0 18 18"><path class="or" d="M7.500 7.500h4v4h-4z"/></svg></button>
                <i class="rule"></i>
                <button aria-label="最近点"><svg class="icon" viewBox="0 0 18 18"><path class="ln" d="M1 16l6-6M11 6l4-4M12.500 11.500h4v4h-4z"/><path class="or" d="M7.500 6.500h4v4h-4z"/></svg></button>
                <button aria-label="无捕捉"><svg class="icon" viewBox="0 0 18 18"><path fill="none" stroke="#ccc" stroke-width="3" d="M3.500 16V8q0-4 3.500-4t3 4v8"/><path stroke="#ef4a5a" stroke-width="2" d="M10 1l6 6M16 1l-6 6"/><path class="or" d="M13.500 12.500h3v3h-3z"/></svg></button>
                <i class="rule"></i>
                <button aria-label="对象捕捉设置"><svg class="icon" viewBox="0 0 18 18"><path class="ln" d="M7 3.500h9.500v13h-13V8"/><path class="or" opacity=".7" d="M1.500 1.500h4v4h-4z"/></svg></button>
            </div>
        </div>
    </main>

    <!-- Command line -->
    <section class="command">
        <div class="command-handle">
            <i class="grip flat"></i>
            <button aria-label="关闭命令行"><svg width="12" height="12" viewBox="0 0 12 12"><path stroke="#eee" stroke-width="2" d="M2 2l8 8M10 2l-8 8"/></svg></button>
            <button aria-label="自定义"><svg width="16" height="16" viewBox="0 0 16 16"><path stroke="#eee" stroke-width="3" stroke-linecap="round" d="M2 14l7-7"/><path fill="#eee" d="M12 1L9 3v4l3 1 3-2V4l-3 2-2-1z"/></svg></button>
        </div>
        <div class="command-body">
            <div class="history"><div><span>命令</span>: L LINE</div><div><span>指定第一个点</span>:</div></div>
            <div class="prompt">
                <svg class="icon" viewBox="0 0 18 18"><path stroke="#9bb" stroke-dasharray="5 1" d="M2 16L16 2"/><path class="bf" d="M1 15h2v2H1zM15 1h2v2h-2z"/></svg>
                <i class="caret"></i>
                <p><b>LINE</b> <span>指定下一点或</span> [<button class="option"><span>放弃</span>(<em>U</em>)</button>]:</p>
            </div>
        </div>
    </section>

    <!-- Layout tabs and status bar -->
    <footer class="footer">
        <div class="footer-top">
            <div class="layouts">
                <button class="layout model">模型</button>
                <button class="layout">布局1</button>
                <button class="layout">布局2</button>
                <button class="layout plus" aria-label="新建布局">+</button>
            </div>
            <div class="status upper">
                <button class="coords">7198.9872, 1566.6731, 0.0000</button>
                <button class="space line">模型</button>
                <button class="line" aria-label="栅格"><svg class="icon" viewBox="0 0 18 18"><path class="ln" d="M5.500 2v14M9.500 2v14M13.500 2v14M2 5.500h14M2 9.500h14M2 13.500h14"/></svg></button>
                <button aria-label="捕捉模式"><svg class="icon" viewBox="0 0 18 18"><path class="ln thick" stroke-dasharray="2 3" d="M3 4h12M3 9h12M3 14h12"/></svg></button>
                <button class="drop" aria-label="捕捉设置"><i class="caret"></i></button>
                <button class="line" aria-label="推断约束"><svg class="icon" viewBox="0 0 18 18"><path class="ln" d="M8.500 11V1.500h7v6h-7"/><path class="lf" d="M2 11h9v5H2z"/></svg></button>
                <button class="line" aria-label="动态输入"><svg class="icon" viewBox="0 0 18 18"><path class="ln" d="M1 5.500h7M4.500 2v7"/><path class="lf" d="M7 10h10v5H7z"/></svg></button>
                <button class="line" aria-label="正交"><svg class="icon" viewBox="0 0 18 18"><path class="ln" d="M4.500 1v14.500H16M5 10.500h5v5"/></svg></button>
                <button aria-label="极轴追踪"><svg class="icon" viewBox="0 0 18 18"><path class="ln" d="M14 6A6 6 0 1 0 14 12M8 9l7-7M8 9.500h10"/></svg></button>
                <button class="drop" aria-label="极轴设置"><i class="caret"></i></button>
                <button aria-label="等轴测草图"><svg class="icon" viewBox="0 0 18 18"><path stroke="#d66" d="M2 2l12 14"/><path stroke="#7c9" d="M8.500 1v16"/><path class="ln" d="M6 9.500h6"/></svg></button>
                <button class="drop" aria-label="等轴测设置"><i class="caret"></i></button>
            </div>
        </div>
        <div class="status lower">
            <button class="on" aria-label="对象捕捉追踪"><svg class="icon" viewBox="0 0 18 18"><path class="ln" d="M2 15L15 2M2 15.500h15"/><path class="wf" d="M6 7l4 4-2 1-3-3z"/></svg></button>
            <button class="on" aria-label="二维对象捕捉"><svg class="icon" viewBox="0 0 18 18"><path class="ln" d="M7 3.500h8.500v12h-12V7M1.500 1.500h4v4h-4z"/></svg></button>
            <button class="drop" aria-label="捕捉列表"><i class="caret"></i></button>
            <button class="line" aria-label="线宽"><svg class="icon" viewBox="0 0 18 18"><path class="wf" d="M1 3h7v1H1zM10 3h7v1h-7zM1 7h7v2H1zM8 7h9v2H8zM1 12h8v3H1zM9 13h8v2H9z"/></svg></button>
            <button class="line" aria-label="透明度"><svg class="icon" viewBox="0 0 18 18"><path class="ln" d="M1.500 1.500h15v15h-15z"/><path class="wf" d="M3 3h3v3H3zM9 3h3v3H9zM6 6h3v3H6zM12 6h3v3h-3zM3 9h3v3H3zM9 9h3v3H9zM6 12h3v3H6zM12 12h3v3h-3z"/></svg></button>
            <button class="line" aria-label="选择循环"><svg class="icon" viewBox="0 0 18 18"><path class="ln" d="M1 3.500h6M4.500 1v6M7 5.500h9"/><path fill="#7ed99a" d="M7 7h10v10H7z"/></svg></button>
            <button class="line" aria-label="三维对象捕捉"><svg class="icon" viewBox="0 0 18 18"><path class="ln" d="M4.500 10V6.500h8v8H7M4.500 6l3-4.500h9l-4 5M16.500 2v8l-4 4"/><path class="or" d="M1.500 12.500h4v4h-4z"/></svg></button>
            <button class="drop" aria-label="三维捕捉列表"><i class="caret"></i></button>
            <button class="line double" aria-label="动态 UCS"><svg class="icon" viewBox="0 0 18 18"><path class="ln" d="M4.500 2v12.500H17M2 5l2.500-3L7 5M14 12l3 2.500-3 2.500"/><path class="wf" d="M11 2l-3 5h3l-1 4 4-5h-3z"/></svg></button>
            <button aria-label="选择过滤"><svg class="icon" viewBox="0 0 18 18"><path class="ln" stroke-dasharray="3 1" d="M3.500 5.500h9v9h-9zM4 5l3-3h9.500v8l-4 4"/><path class="bf" d="M2 4h3v3H2zM11 4h3v3h-3zM2 13h3v3H2zM11 13h3v3h-3z"/></svg></button>
            <button class="drop" aria-label="过滤列表"><i class="caret"></i></button>
            <button class="on" aria-label="小控件"><svg class="icon" viewBox="0 0 18 18"><path class="ln" d="M9 2.500L3.500 7v6L9 16l5.500-3V7zM9 3v7l-6 4M9 10l6 4"/><circle cx="9" cy="3" r="1.500" class="ln"/><circle cx="3" cy="14" r="1.500" class="ln"/><circle cx="15" cy="14" r="1.500" class="ln"/></svg></button>
            <button class="drop" aria-label="小控件列表"><i class="caret"></i></button>
            <button class="on line double" aria-label="注释可见性"><svg class="icon" viewBox="0 0 18 18"><path class="wf" d="M8 1l2 9 5 7-5-2H6l-5 2 5-7z"/><circle class="ln" cx="14" cy="4" r="2.500"/></svg></button>
            <button aria-label="自动缩放"><svg class="icon" viewBox="0 0 18 18"><path class="lf" d="M8 2l2 8 5 7-5-2H6l-5 2 5-7z"/><path class="lf" d="M14 0l-3 5h3l-1 4 4-5h-3z"/></svg></button>
            <button aria-label="注释"><svg class="icon" viewBox="0 0 18 18"><path class="lf" d="M9 2l2 8 5 7-5-2H7l-5 2 5-7z"/></svg></button>
            <button class="scale">1:1 / 100%</button>
            <button class="drop" aria-label="比例列表"><i class="caret"></i></button>
            <button class="line double" aria-label="切换工作空间"><svg class="icon" viewBox="0 0 18 18"><circle cx="9" cy="9" r="4" fill="none" stroke="#ddd" stroke-width="3"/><circle cx="9" cy="9" r="6.500" fill="none" stroke="#ddd" stroke-width="3" stroke-dasharray="2.600 2.500"/></svg></button>
            <button class="drop" aria-label="工作空间列表"><i class="caret"></i></button>
            <button class="line" aria-label="注释监视器"><svg class="icon" viewBox="0 0 18 18"><path class="ln thick" d="M9 1v16M1 9h16"/></svg></button>
            <button class="line double" aria-label="单位"><svg class="icon" viewBox="0 0 18 18"><path class="lf" d="M5 1h8v2h-3v1h3v2h-4v1h4v2h-3v1h3v2h-4v1h4v4H5z"/></svg></button>
            <button class="units">小数</button>
            <button class="drop" aria-label="单位列表"><i class="caret"></i></button>
            <button class="line" aria-label="快捷特性"><svg class="icon" viewBox="0 0 18 18"><path class="ln" d="M3.500 2.500h11v14h-11zM5 7.500h2M9 7.500h4M5 10.500h2M9 10.500h4M5 13.500h2M9 13.500h4"/></svg></button>
            <button class="line" aria-label="锁定界面"><svg class="icon" viewBox="0 0 18 18"><path class="ln" d="M7 14.500H1.500v-8h9"/><path class="lf" d="M8 10h7v6H8z"/><path class="ln" d="M12.500 10V6q2-2 4 0"/></svg></button>
            <button class="drop" aria-label="锁定列表"><i class="caret"></i></button>
            <button class="line" aria-label="隔离对象"><svg class="icon" viewBox="0 0 18 18"><path class="ln" d="M9 8l-4 7.500h8zM2.500 3.500h4v4h-4z"/><circle class="ln" cx="14" cy="5" r="2.500"/></svg></button>
            <button class="on line" aria-label="硬件加速"><svg class="icon" viewBox="0 0 18 18"><circle class="ln thick" cx="9" cy="9" r="7"/><path class="wf" d="M13 3l-7 7 3 3z"/></svg></button>
            <button class="line" aria-label="全屏显示"><svg class="icon" viewBox="0 0 18 18"><path class="ln" d="M1.500 4.500h15v11h-15zM5 12l7-5"/></svg></button>
            <button aria-label="自定义状态栏"><svg class="icon" viewBox="0 0 18 18"><path class="wf" d="M1 3h16v2H1zM1 8h16v2H1zM1 14h16v2H1z"/></svg></button>
        </div>
    </footer>

    <div class="watermark"><b>头条</b> @推优创意</div>
</div>

</body>
</html>
```
FILE: styles.css
```css
* {
    box-sizing: border-box;
}

body {
    margin: 0;
    background: #ddd;
    font-family: "Noto Sans", "Noto Sans CJK SC", sans-serif;
    font-size: 12px;
    color: #eee;
}

button, input, select {
    font: inherit;
    color: inherit;
    border: none;
    background: none;
    padding: 0;
    margin: 0;
    border-radius: 0;
}

button {
    display: flex;
    align-items: center;
    justify-content: center;
    flex-shrink: 0;
}

a {
    color: inherit;
    text-decoration: none;
}

svg {
    display: block;
    flex-shrink: 0;
}

.window {
    position: relative;
    display: flex;
    flex-direction: column;
    height: 100vh;
    padding: 0 7px 7px;
    border: 1px solid #707070;
    border-radius: 8px;
    background: #fff;
    overflow: hidden;
}

/* icon parts */
.icon {
    width: 18px;
    height: 18px;
}

.ln { fill: none; stroke: #ddd; }
.bl { fill: none; stroke: #74b4e4; }
.or { fill: none; stroke: #eab58c; }
.thick { stroke-width: 2; }
.wf { fill: #f4f4f4; }
.lf { fill: #d5d5d5; }
.gf { fill: #999; }
.df { fill: #555; }
.bf { fill: #6bb3e8; }
.sys { fill: none; stroke: #444; }

.caret {
    flex-shrink: 0;
    width: 0;
    height: 0;
    border: 4px solid transparent;
    border-top: 4px solid #aaa;
    border-bottom: none;
}

.caret.dark { border-top-color: #333; }
.caret.light { border-width: 3px; border-top-color: #fff; }
.caret.up { border-top: none; border-bottom: 4px solid #333; }

/* header */
.header {
    display: grid;
    grid-template-columns: 41px 1fr;
    grid-template-rows: 31px 22px;
}

.app-button {
    grid-column: 1;
    grid-row: 1 / 3;
    z-index: 1;
    height: 41px;
    margin-top: 7px;
    border: 1px solid #111;
    background: linear-gradient(#d0d0d0, #555);
}

.title-row {
    display: flex;
    align-items: flex-start;
    grid-column: 2;
    grid-row: 1;
}

.quick-access, .info-center {
    display: flex;
    align-items: center;
    height: 23px;
    margin-top: 7px;
    background: linear-gradient(#999, #777);
    border: 1px solid #666;
}

.quick-access {
    width: 122px;
    padding-left: 4px;
}

.quick-access button {
    width: 24px;
}

.quick-access button:last-child {
    width: 18px;
}

.window-title {
    flex: 1;
    padding: 6px 8px 0 0;
    color: #111;
    font-size: 12px;
    line-height: 18px;
    text-align: right;
}

.info-center {
    width: 446px;
    gap: 4px;
    padding-right: 3px;
}

.expand {
    width: 8px;
}

.search {
    width: 180px;
    height: 21px;
    padding: 0 4px;
    border: 1px solid #444;
    background: #707070;
    font-style: italic;
}

.search::placeholder {
    color: #ccc;
    opacity: 1;
}

.sign-in {
    gap: 4px;
    margin-left: 2px;
}

.push {
    margin-left: auto;
    margin-right: 8px;
}

.help-button {
    margin: 0 2px 0 14px;
}

.window-controls {
    display: flex;
    width: 103px;
    height: 19px;
    margin-left: 20px;
    border: 1px solid #999;
    border-top: none;
    border-radius: 0 0 5px 5px;
}

.window-controls button {
    width: 27px;
    border-right: 1px solid #aaa;
}

.window-controls .close {
    flex: 1;
    border-right: none;
}

.menu {
    grid-column: 1 / 3;
    grid-row: 2;
    display: flex;
    align-items: center;
    justify-content: space-between;
    padding: 0 4px 0 55px;
    background: linear-gradient(#858585, #444);
    color: #fff;
    white-space: nowrap;
}

.doc-controls {
    display: flex;
    gap: 5px;
    margin-left: -12px;
}

/* drawing tabs */
.tabs {
    display: flex;
    height: 25px;
    padding: 2px 0 0 9px;
    background: #373737;
    flex-shrink: 0;
}

.tab {
    justify-content: space-between;
    background: #4c4c4c;
    color: #aaa;
    clip-path: polygon(0 100%, 5px 90%, 12px 12px, 16px 4px, 22px 0, calc(100% - 12px) 0, calc(100% - 7px) 4px, calc(100% - 4px) 10px, 100% 100%);
}

.tab.start {
    width: 136px;
    padding-left: 22px;
}

.tab.file {
    width: 207px;
    margin-left: -8px;
    padding: 0 11px 0 18px;
}

.tab.active {
    width: 142px;
    margin-left: -7px;
    padding: 0 22px 0 18px;
    background: linear-gradient(#6c6c6c, #5a5a5a);
    color: #fff;
}

.tab.add {
    justify-content: center;
    width: 26px;
    height: 15px;
    margin-top: 4px;
    margin-left: -4px;
    clip-path: polygon(0 0, 80% 0, 100% 100%, 20% 100%);
    color: #ccc;
    font-size: 14px;
    font-weight: bold;
}

.tab-close {
    color: #333;
    font-size: 14px;
}

.active .tab-close {
    color: #444;
}

/* toolbars */
.toolbar-row {
    display: flex;
    gap: 1px;
    flex-shrink: 0;
    height: 28px;
    padding-top: 2px;
    background: #5c5c5c;
    overflow: hidden;
}

.toolbar {
    display: flex;
    align-items: center;
    height: 25px;
    border: 1px solid #3c3c3c;
    background: #555;
    flex-shrink: 0;
}

.toolbar.grow {
    flex: 1;
    min-width: 0;
    overflow: hidden;
}

.toolbar > button {
    width: 23px;
    height: 23px;
}

.toolbar > .drop {
    width: 13px;
}

.toolbar .caret {
    border-top-color: #999;
}

.grip {
    width: 4px;
    height: 15px;
    margin: 0 2px;
    flex-shrink: 0;
    background: repeating-linear-gradient(#222 0 1px, #777 1px 2px);
}

.grip.flat {
    display: block;
    width: 14px;
    height: 4px;
    margin: 2px auto;
    background: repeating-linear-gradient(90deg, #222 0 1px, #777 1px 2px);
}

.sep {
    width: 1px;
    height: 18px;
    margin: 0 3px 0 2px;
    flex-shrink: 0;
    background: #333;
}

.combo {
    display: flex;
    align-items: center;
    height: 22px;
    flex-shrink: 0;
    background: #f4f4f4;
    color: #666;
    padding-right: 3px;
}

.combo select {
    flex: 1;
    min-width: 0;
    height: 22px;
    appearance: none;
}

.workspace { width: 174px; padding-left: 9px; }
.text-style { width: 120px; padding-left: 19px; }
.dim-style { width: 100px; padding-left: 18px; }
.color { width: 150px; padding-left: 2px; gap: 4px; }

.layers {
    flex: 1;
}

.layer {
    flex: 1;
    padding-left: 2px;
}

.layer .wide {
    width: 22px;
}

.layer select {
    padding-left: 4px;
}

.spacer {
    width: 2px;
}

.swatch {
    width: 14px;
    height: 14px;
    border: 1px solid #111;
    background: #fff;
}

.linetypes {
    width: 73px;
    padding-left: 2px;
}

.toolbar .linetype {
    flex: 1;
    height: 22px;
}

.linetype::before {
    content: "";
    width: 60px;
    height: 1px;
    background: #111;
}

/* work area */
.work-area {
    display: flex;
    flex: 1 1 0;
    min-height: 0;
    padding: 2px 0;
    background: #5c5c5c;
    overflow: hidden;
}

.dock {
    display: flex;
    flex-direction: column;
    gap: 1px;
    width: 28px;
    flex-shrink: 0;
    overflow: hidden;
}

.dock.right {
    width: 32px;
    padding-left: 4px;
}

.palette {
    width: 24px;
    flex-shrink: 0;
    padding-bottom: 1px;
    border: 1px solid #3a3a3a;
    background: #595959;
}

.palette button {
    width: 22px;
    height: 22px;
}

.rule {
    display: block;
    width: 19px;
    height: 2px;
    margin: 2px;
    background: #f0f0f0;
}

.viewport {
    display: grid;
    grid-template-columns: 1fr 17px;
    grid-template-rows: 1fr 17px;
    flex: 1;
    margin-left: 1px;
    min-width: 0;
    background: #f0f0f0;
}

.canvas {
    position: relative;
    background: #212830;
    overflow: hidden;
}

.view-label {
    position: absolute;
    top: 5px;
    left: 3px;
    color: #e6e6e6;
}

.view-cube {
    position: absolute;
    top: 8px;
    right: 8px;
}

.view-cube text {
    fill: #b4b8bc;
    font-size: 13px;
    text-anchor: middle;
}

.wcs {
    position: absolute;
    top: 113px;
    right: 32px;
    width: 48px;
    height: 18px;
    gap: 6px;
    border: 1px solid #c0c2ca;
    border-radius: 4px;
    background: #9699a4;
    color: #565b66;
    font-size: 11px;
}

.rubber-band {
    position: absolute;
    right: 0;
    bottom: 208px;
    overflow: visible;
}

.ucs {
    position: absolute;
    left: 8px;
    bottom: 4px;
}

.scroll-y {
    display: flex;
    flex-direction: column;
    align-items: center;
}

.scroll-y button, .scroll-x .thumb {
    width: 15px;
    height: 15px;
    margin-bottom: 1px;
    border: 1px solid #999;
    border-radius: 2px;
    background: linear-gradient(#f8f8f8, #ccc);
}

.scroll-y .end {
    margin-top: auto;
}

.scroll-y .caret {
    border-top-color: #333;
}

.scroll-x {
    display: flex;
    align-items: center;
    grid-column: 1 / 3;
    padding: 0 22px 0 4px;
    gap: 6px;
}

.scroll-x .thumb {
    margin-left: auto;
}

/* command line */
.command {
    display: flex;
    flex-shrink: 0;
    border: 1px solid #666;
    border-left: none;
    background: #c8c8c8;
    color: #111;
    font-family: "Liberation Mono", "Noto Sans CJK SC", monospace;
}

.command span {
    font-size: 13px;
}

.command-handle {
    display: flex;
    flex-direction: column;
    align-items: center;
    justify-content: space-between;
    width: 25px;
    padding: 2px 0 4px;
    background: linear-gradient(#8a8a8a, #3c3c3c);
}

.command-handle .grip {
    width: 18px;
    margin: 1px;
    background: repeating-linear-gradient(90deg, #aaa 0 2px, #777 2px 3px);
}

.command-body {
    flex: 1;
}

.history {
    height: 34px;
    padding: 1px 2px;
    line-height: 15px;
    border-bottom: 1px solid #777;
}

.prompt {
    display: flex;
    align-items: center;
    height: 22px;
    padding-left: 4px;
    background: #fff;
}

.prompt p {
    margin: 0;
    line-height: 18px;
}

.prompt .caret {
    margin: 0 7px 0 1px;
    border-width: 3px;
    border-top-color: #888;
}

.option {
    display: inline;
    border-radius: 3px;
    background: #d0d0d0;
    line-height: 16px;
}

.option em {
    color: #2a20c8;
    font-style: normal;
}

/* layout tabs and status bar */
.footer {
    flex-shrink: 0;
    background: #373737;
}

.footer-top {
    display: flex;
    justify-content: space-between;
}

.layouts {
    display: flex;
    padding-left: 12px;
}

.layout {
    width: 54px;
    height: 18px;
    background: #505050;
    color: #aaa;
    clip-path: polygon(0 0, 100% 0, calc(100% - 8px) 75%, calc(100% - 13px) 100%, 13px 100%, 8px 75%);
}

.layout.model {
    width: 47px;
    background: linear-gradient(#555, #888);
    color: #fff;
    font-weight: bold;
}

.layout.plus {
    width: 28px;
    color: #ddd;
    font-size: 14px;
    clip-path: polygon(0 0, 100% 0, 80% 80%, 70% 100%, 30% 100%);
}

.status {
    display: flex;
    height: 28px;
    border: 1px solid #777;
    background: #4b4b4b;
    color: #fff;
}

.status.upper {
    width: 434px;
    border-bottom: none;
}

.status.lower {
    margin-left: 90px;
}

.status button {
    width: 25px;
}

.status .drop {
    width: 15px;
}

.status .caret {
    border-top-color: #fff;
}

.status .line {
    border-left: 1px solid #777;
}

.status .double {
    border-left: 2px solid #777;
}

.status .on {
    background: #5a87b9;
    background-clip: content-box;
    padding: 2px 1px;
}

.status .coords {
    flex: 1;
}

.status .space {
    width: 31px;
    font-weight: bold;
}

.status .scale {
    width: 64px;
}

.status .units {
    flex: 1;
    justify-content: flex-start;
    padding-left: 5px;
    font-weight: bold;
}

.watermark {
    position: absolute;
    right: 20px;
    bottom: 14px;
    color: #fff;
    font-size: 23px;
    line-height: 34px;
    text-shadow: 1px 1px 2px #000, -1px 1px 1px #222, 2px 2px 1px #222;
    pointer-events: none;
}

.watermark b {
    font-weight: 900;
}
```
